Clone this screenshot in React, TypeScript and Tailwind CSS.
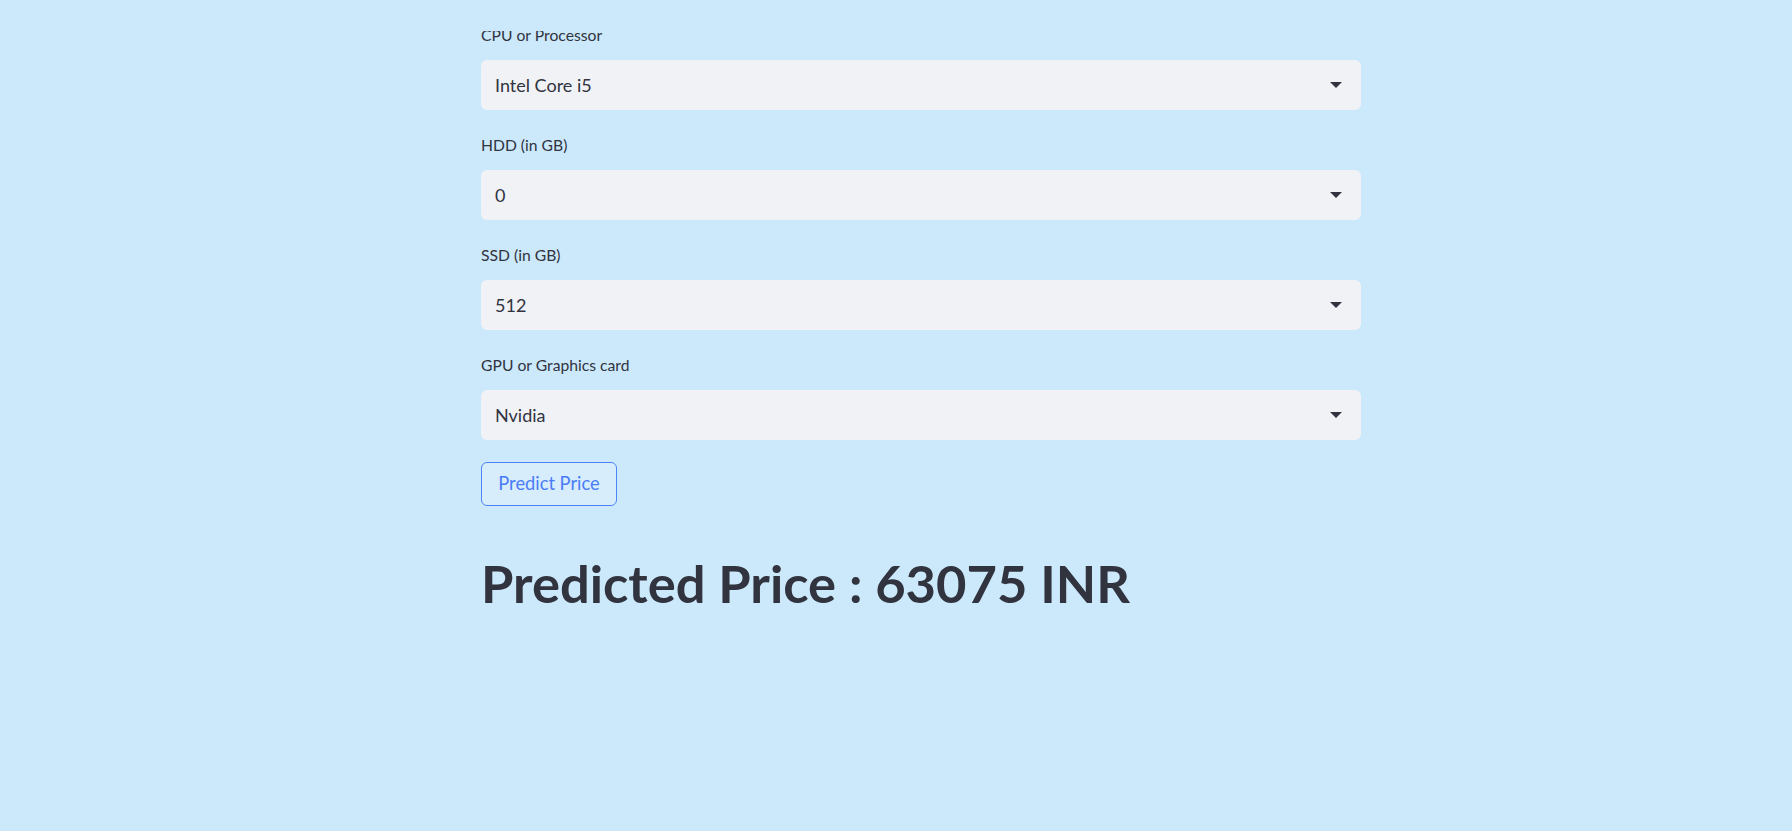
import React from "react";

const Arrow = () => (
  <svg width="12" height="6" viewBox="0 0 12 6" className="shrink-0">
    <path d="M0 0 L12 0 L6 6 Z" fill="#31333f" />
  </svg>
);

const Field = ({ label, value }: { label: string; value: string }) => (
  <div className="flex flex-col mb-[20px]">
    <div className="h-[40px] pt-[5px] text-[15.7px] leading-[20px] text-[#31333f]">{label}</div>
    <div className="h-[50px] rounded-[6px] bg-[#f0f2f6] flex items-center justify-between pl-[14px] pr-[19px]">
      <span className="text-[18px] text-[#31333f]">{value}</span>
      <Arrow />
    </div>
  </div>
);

export default function App() {
  return (
    <div
      className="relative h-[831px] w-full overflow-hidden bg-[#cbe9fb]"
      style={{ fontFamily: "Lato, 'Noto Sans', sans-serif" }}
    >
      <div className="absolute top-0 left-0 right-0 h-[31px] bg-[#cbe9fb] z-10" />
      <div className="ml-[481px] w-[880px] pt-[20px] flex flex-col">
        <Field label="CPU or Processor" value="Intel Core i5" />
        <Field label="HDD (in GB)" value="0" />
        <Field label="SSD (in GB)" value="512" />
        <Field label="GPU or Graphics card" value="Nvidia" />
        <div className="mt-[2px]">
          <button className="h-[44px] w-[136px] rounded-[6px] border border-[#4d84f5] bg-[#d7edfc] text-[18.3px] text-[#4a7cf8] flex items-center justify-center">
            Predict Price
          </button>
        </div>
        <h1 className="mt-[45px] text-[52.5px] leading-[1.2] font-bold text-[#31333f]">
          Predicted Price : 63075 INR
        </h1>
      </div>
    </div>
  );
}
